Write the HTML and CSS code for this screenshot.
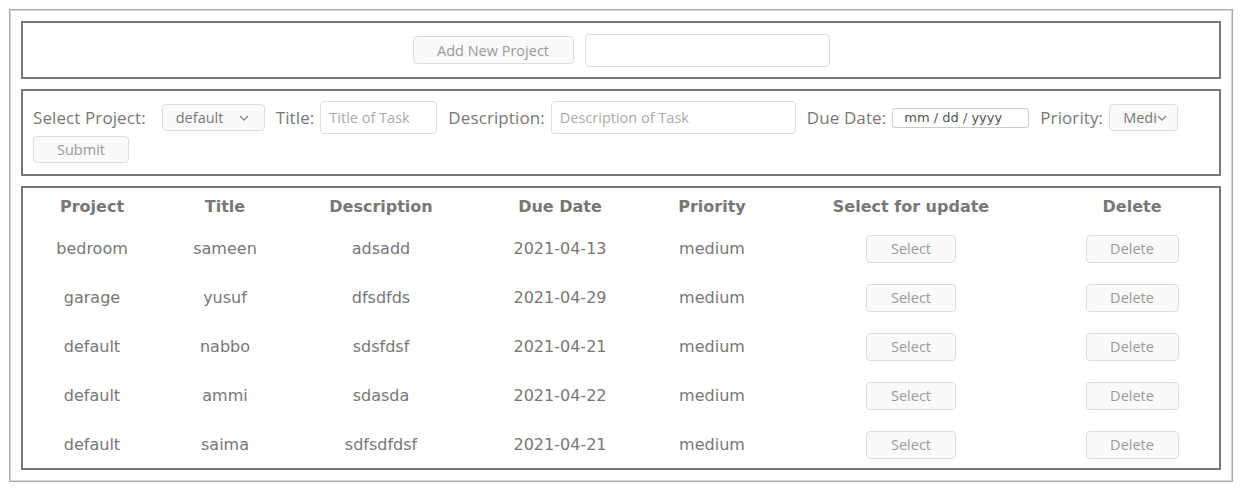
FILE: index.html
```html
<!DOCTYPE html>
<html>
<head>
<meta charset="utf-8">
<link rel="stylesheet" href="styles.css">
</head>
<body>
<div class="app">
  <section class="box add-project">
    <button class="btn btn-add">Add New Project</button>
    <input class="input input-project" type="text">
  </section>

  <section class="box task-form">
    <span class="label label-project">Select Project:</span>
    <div class="select select-project"><span class="select-text">default</span><svg class="chev" width="10" height="6" viewBox="0 0 10 6"><path d="M1 1l4 4 4-4" fill="none" stroke="#888" stroke-width="1.3"/></svg></div>
    <span class="label">Title:</span>
    <input class="input input-title" type="text" placeholder="Title of Task">
    <span class="label">Description:</span>
    <input class="input input-desc" type="text" placeholder="Description of Task">
    <span class="label">Due Date:</span>
    <div class="date">mm / dd / yyyy</div>
    <span class="label">Priority:</span>
    <div class="select select-priority"><span class="select-text clip">Medium</span><svg class="chev" width="10" height="6" viewBox="0 0 10 6"><path d="M1 1l4 4 4-4" fill="none" stroke="#888" stroke-width="1.3"/></svg></div>
    <div class="break"></div>
    <button class="btn btn-submit">Submit</button>
  </section>

  <section class="box tasks">
    <table class="table">
      <colgroup>
        <col class="c-project"><col class="c-title"><col class="c-desc"><col class="c-date"><col class="c-prio"><col class="c-sel"><col class="c-del">
      </colgroup>
      <thead>
        <tr><th>Project</th><th>Title</th><th>Description</th><th>Due Date</th><th>Priority</th><th>Select for update</th><th>Delete</th></tr>
      </thead>
      <tbody>
        <tr><td>bedroom</td><td>sameen</td><td>adsadd</td><td>2021-04-13</td><td>medium</td><td><button class="btn btn-select">Select</button></td><td><button class="btn btn-delete">Delete</button></td></tr>
        <tr><td>garage</td><td>yusuf</td><td>dfsdfds</td><td>2021-04-29</td><td>medium</td><td><button class="btn btn-select">Select</button></td><td><button class="btn btn-delete">Delete</button></td></tr>
        <tr><td>default</td><td>nabbo</td><td>sdsfdsf</td><td>2021-04-21</td><td>medium</td><td><button class="btn btn-select">Select</button></td><td><button class="btn btn-delete">Delete</button></td></tr>
        <tr><td>default</td><td>ammi</td><td>sdasda</td><td>2021-04-22</td><td>medium</td><td><button class="btn btn-select">Select</button></td><td><button class="btn btn-delete">Delete</button></td></tr>
        <tr><td>default</td><td>saima</td><td>sdfsdfdsf</td><td>2021-04-21</td><td>medium</td><td><button class="btn btn-select">Select</button></td><td><button class="btn btn-delete">Delete</button></td></tr>
      </tbody>
    </table>
  </section>
</div>
</body>
</html>
```
FILE: styles.css
```css
* { box-sizing: border-box; }
html, body { margin: 0; padding: 0; background: #fff; }
body { font-family: "Open Sans", "Noto Sans", sans-serif; color: #777; }

.app {
  margin: 9px 0 0 9px;
  width: 1224px;
  border: 1px solid #aaa;
  box-shadow: inset 0 0 0 1px #d8d8d8;
  padding: 11px;
}

.box {
  border: 2px solid #777;
}
.box + .box { margin-top: 10px; }

.add-project {
  height: 58px;
  display: flex;
  align-items: center;
  justify-content: center;
  gap: 11px;
}

.btn {
  font-family: "Open Sans", "Noto Sans", sans-serif;
  font-size: 14.5px;
  color: #999;
  background: #fafafa;
  border: 1px solid #ddd;
  border-radius: 4px;
  padding: 0;
  height: 28px;
  cursor: pointer;
}
.btn-add { width: 161px; }
.btn-submit { width: 96px; height: 27px; margin-top: 2px; }
.btn-select { width: 90px; }
.btn-delete { width: 93px; }

.input {
  font-family: "Open Sans", "Noto Sans", sans-serif;
  font-size: 14.5px;
  color: #555;
  height: 33px;
  border: 1px solid #ddd;
  border-radius: 4px;
  background: #fff;
  padding: 0 8px;
  outline: none;
}
.input::placeholder { color: #aaa; }
.input-project { width: 245px; }
.input-title { width: 117px; }
.input-desc { width: 245px; }

.task-form {
  height: 87px;
  padding: 10px 10px;
  display: flex;
  flex-wrap: wrap;
  align-items: center;
  align-content: flex-start;
}
.label {
  font-size: 17px;
  letter-spacing: 0.1px;
  margin-right: 6px;
  margin-left: 11px;
  white-space: nowrap;
}
.label-project { margin-left: 0; margin-right: 16px; }
.break { flex-basis: 100%; height: 0; }

.select {
  display: flex;
  align-items: center;
  height: 27px;
  border: 1px solid #ddd;
  border-radius: 4px;
  background: #fafafa;
  font-size: 14.5px;
  color: #777;
}
.select-project { width: 103px; padding: 0 15px 0 13px; justify-content: space-between; }
.select-priority { width: 69px; padding: 0 10px 0 13px; }
.select-text { white-space: nowrap; }
.clip { width: 34px; overflow: hidden; }
.chev { flex: none; }

.date {
  width: 137px;
  height: 20px;
  border: 1px solid #ccc;
  border-radius: 3px;
  font-family: "DejaVu Sans", sans-serif;
  font-size: 13px;
  color: #555;
  padding: 0 11px;
  display: flex;
  align-items: center;
  white-space: nowrap;
}

.tasks { height: 284px; }
.table {
  width: 100%;
  border-collapse: collapse;
  table-layout: fixed;
  font-family: "DejaVu Sans", sans-serif;
  font-size: 16px;
  color: #777;
}
.c-project { width: 138px; }
.c-title { width: 128px; }
.c-desc { width: 184px; }
.c-date { width: 174px; }
.c-prio { width: 130px; }
.c-sel { width: 268px; }
.c-del { width: 174px; }
.table th {
  font-weight: bold;
  height: 36px;
  padding: 0;
  text-align: center;
  vertical-align: middle;
}
.table td {
  height: 49px;
  padding: 0;
  text-align: center;
  vertical-align: middle;
}
.table td .btn { vertical-align: middle; }
```
